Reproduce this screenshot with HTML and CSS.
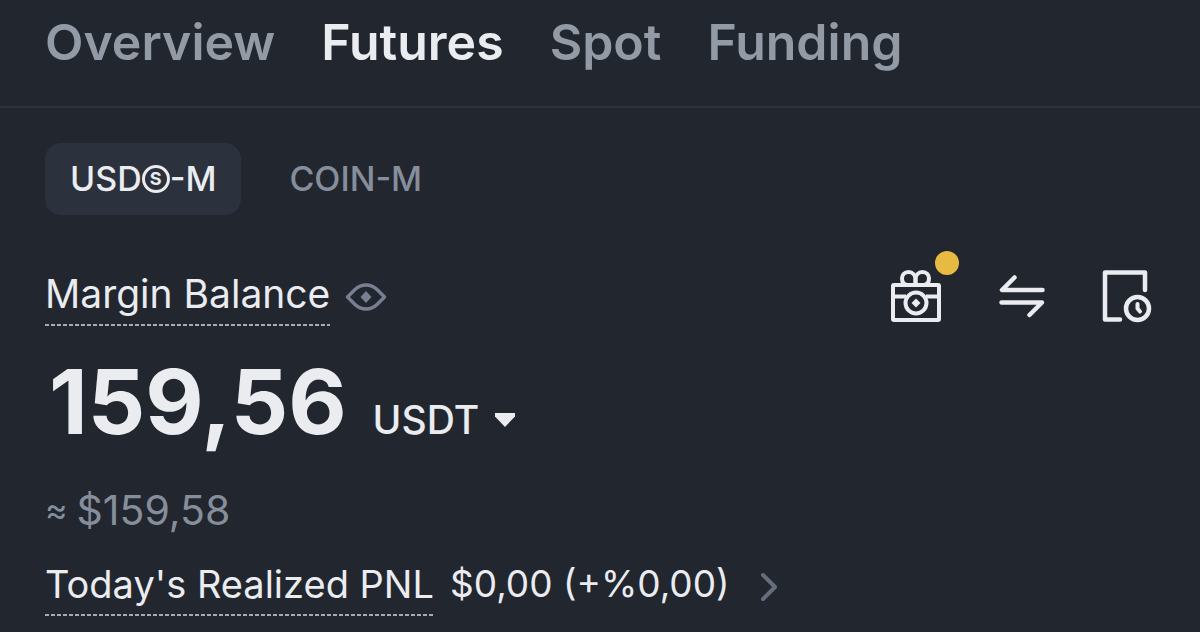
FILE: index.html
```
<!DOCTYPE html>
<html lang="en">

<head>
  <meta charset="UTF-8"/>
  <meta name="viewport" content="width=device-width, initial-scale=1"/>
  <title>Futures wallet</title>

  <link rel="stylesheet" href="styles.css">
</head>

<body>
<nav class="tabs">
  <a class="tab" href="#">Overview</a>
  <a class="tab active" href="#">Futures</a>
  <a class="tab" href="#">Spot</a>
  <a class="tab" href="#">Funding</a>
</nav>

<main class="wallet">
  <div class="markets">
    <button class="market active" type="button">USD<span class="coin">S</span>-M</button>
    <button class="market" type="button">COIN-M</button>
  </div>

  <div class="balance-head">
    <span class="hint">Margin Balance</span>
    <button class="icon-button" type="button" aria-label="Hide balance">
      <svg width="42" height="28" viewBox="0 0 42 28" fill="none" stroke="#777f91" stroke-width="3.5" stroke-linejoin="round">
        <path d="M2.5 14 L10 6.500 C16.500 .5 25.500 .5 32 6.500 L39.500 14 L32 21.500 C25.500 27.500 16.500 27.500 10 21.500 Z"/>
        <path d="M21 8 L26.500 14 L21 20 L15.500 14 Z" fill="#777f91" stroke="none"/>
      </svg>
    </button>
    <div class="actions">
      <button class="icon-button gift" type="button" aria-label="Rewards">
        <svg width="52" height="56" viewBox="0 0 52 56" fill="none" stroke="#eaecef" stroke-width="4" stroke-linejoin="round">
          <rect x="3" y="17" width="46" height="35" rx="1"/>
          <path d="M3 28.500 H16 M36 28.500 H49"/>
          <path d="M25.500 17 V11.500 C25.500 7 22.500 4 18.500 4 C14.500 4 12 7 12 10.500 C12 14 14 16.500 17 17"/>
          <path d="M25.500 17 V11.500 C25.500 7 28.500 4 32.500 4 C36.500 4 39 7 39 10.500 C39 14 37 16.500 34 17"/>
          <circle cx="26" cy="35" r="10.500"/>
          <path d="M26 30.500 L30.500 35 L26 39.500 L21.500 35 Z" fill="#eaecef" stroke="none"/>
        </svg>
        <span class="dot"></span>
      </button>
      <button class="icon-button" type="button" aria-label="Transfer">
        <svg width="46" height="56" viewBox="0 0 46 56" fill="none" stroke="#eaecef" stroke-width="4.500" stroke-linecap="round" stroke-linejoin="round">
          <path d="M15.500 9.500 L3 22 H43.500"/>
          <path d="M2.500 34.500 H43 L30.500 47"/>
        </svg>
      </button>
      <button class="icon-button" type="button" aria-label="History">
        <svg width="50" height="56" viewBox="0 0 50 56" fill="none" stroke="#eaecef" stroke-width="4.500" stroke-linecap="round" stroke-linejoin="round">
          <path d="M18 51.500 H3 V4.500 H43 V22"/>
          <circle cx="35.500" cy="40.500" r="11.500"/>
          <path d="M35.500 36 V40.500 L38 43.500" stroke-width="4"/>
        </svg>
      </button>
    </div>
  </div>

  <div class="balance">
    <span class="amount">159,56</span>
    <button class="currency" type="button">USDT
      <svg width="20" height="14" viewBox="0 0 20 14">
        <path d="M0 0 H20 V3.500 L10 14 L0 3.500 Z" fill="#eaecef"/>
      </svg>
    </button>
  </div>

  <div class="estimate"><span class="approx">≈</span> <span>$159,58</span></div>

  <a class="pnl" href="#">
    <span class="hint">Today's Realized PNL</span>
    <span class="pnl-value">$0,00 (+%0,00)</span>
    <svg class="chevron" width="18" height="30" viewBox="0 0 18 30" fill="none" stroke="#666d7e" stroke-width="4" stroke-linecap="round" stroke-linejoin="round">
      <path d="M3 3 L15 15 L3 27"/>
    </svg>
  </a>
</main>
</body>

</html>
```

FILE: styles.css
```
* {
    box-sizing: border-box;
}

body {
    margin: 0;
    background-color: #22262f;
    color: #eaecef;
    font-family: Inter, "Liberation Sans", sans-serif;
    font-size: 39px;
    line-height: 52px;
}

a {
    color: inherit;
    text-decoration: none;
}

button {
    margin: 0;
    padding: 0;
    border: 0;
    background: none;
    color: inherit;
    font: inherit;
    cursor: pointer;
}

svg {
    display: block;
}

.tabs {
    display: flex;
    gap: 46px;
    padding: 12px 45px 34px;
    border-bottom: 2px solid #2d323c;
    font-size: 50px;
    font-weight: 600;
    line-height: 60px;
}

.tab {
    color: #929aa5;
}

.tab.active {
    color: #eaecef;
}

.wallet {
    padding: 35px 48px 16px 45px;
}

.markets {
    display: flex;
}

.market {
    display: flex;
    align-items: center;
    height: 72px;
    padding: 0 25px;
    border-radius: 16px;
    color: #868e9b;
    font-size: 34px;
    font-weight: 500;
}

.market.active {
    background-color: #2b313d;
    color: #eaecef;
}

.market + .market {
    margin-left: 23px;
}

.coin {
    width: 28px;
    height: 28px;
    border: 3px solid;
    border-radius: 50%;
    font-size: 18px;
    font-weight: 700;
    line-height: 22px;
    text-align: center;
}

.balance-head {
    display: flex;
    align-items: center;
    margin-top: 53px;
}

/* dashed underline, 4px dash and 2px gap */
.hint {
    padding-bottom: 6px;
    background: repeating-linear-gradient(90deg, #a5aab4 0 4px, transparent 4px 6px) left bottom / 100% 2px no-repeat;
}

.balance-head > .icon-button {
    margin-left: 15px;
}

.actions {
    display: flex;
    align-self: flex-start;
    gap: 57px;
    margin-left: auto;
}

.gift {
    position: relative;
}

.dot {
    position: absolute;
    top: -17px;
    right: -17px;
    width: 24px;
    height: 24px;
    border-radius: 50%;
    background-color: #e8ba42;
}

.balance {
    display: flex;
    align-items: baseline;
    gap: 26px;
    margin-top: 22px;
    padding-left: 4px;
}

.amount {
    font-size: 90px;
    font-weight: 700;
    line-height: 108px;
}

.currency {
    display: flex;
    align-items: center;
    gap: 16px;
    font-weight: 500;
}

.estimate {
    display: flex;
    gap: 9px;
    margin-top: 28px;
    color: #868e9b;
    font-size: 41px;
}

.approx {
    font-size: 34px;
}

.pnl {
    display: flex;
    align-items: flex-start;
    gap: 16px;
    margin-top: 22px;
    font-size: 38px;
}

.pnl-value {
    font-size: 37px;
}

.chevron {
    margin: 14px 0 0 14px;
}
```
